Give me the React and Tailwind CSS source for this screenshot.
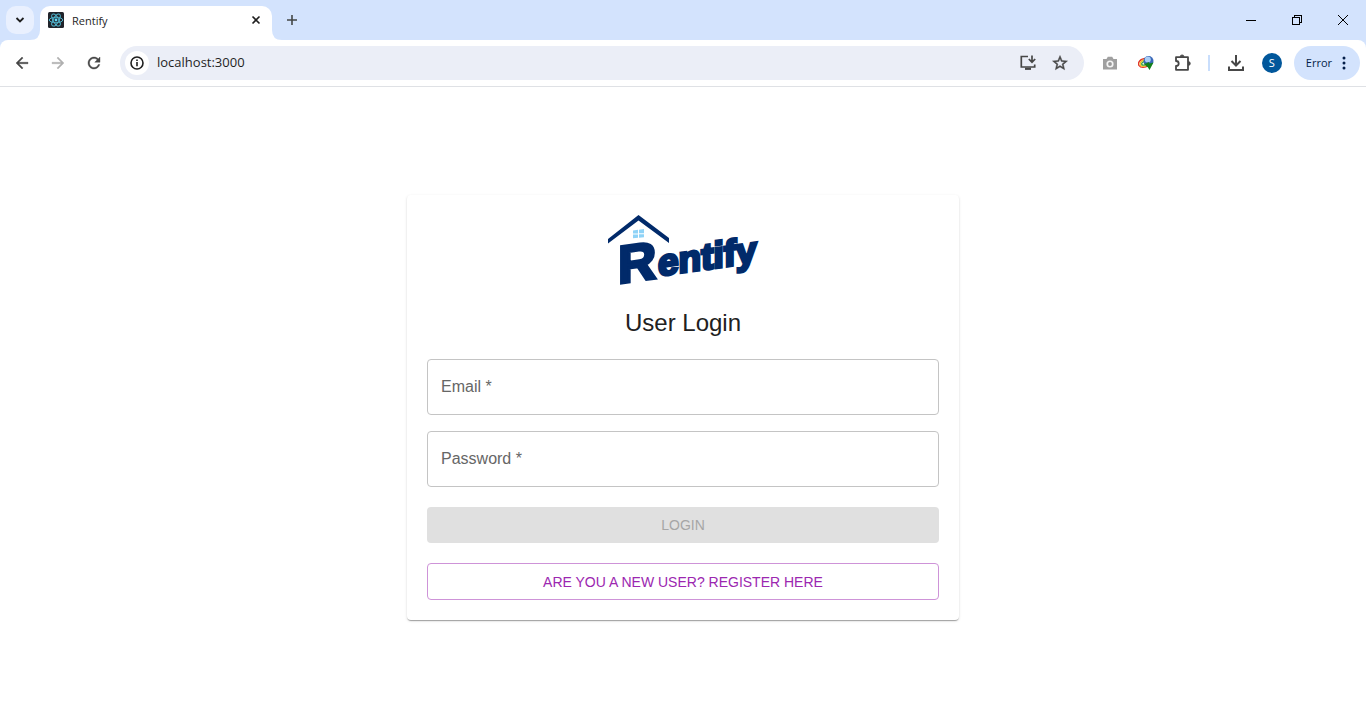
import React from 'react';

const icon = 'shrink-0';

function ReactFavicon() {
  return (
    <svg className={icon} width="16" height="16" viewBox="0 0 32 32" aria-hidden="true">
      <rect width="32" height="32" rx="3" fill="#20232a" />
      <g fill="none" stroke="#4fb3cb" strokeWidth="2">
        <ellipse cx="16" cy="16" rx="13.500" ry="5.500" />
        <ellipse cx="16" cy="16" rx="13.500" ry="5.500" transform="rotate(60 16 16)" />
        <ellipse cx="16" cy="16" rx="13.500" ry="5.500" transform="rotate(120 16 16)" />
      </g>
      <circle cx="16" cy="16" r="2.8" fill="#61dafb" />
    </svg>
  );
}

function RentifyLogo() {
  return (
    <svg className="overflow-visible" width="150" height="72" viewBox="0 0 150 72" role="img" aria-label="Rentify">
      <path d="M0 24 L30.500 0 L61 23 V28 L30.500 5.500 L0 28.500 Z" fill="#012a6a" />
      <path
        d="M25 15.500 l5 -.7 v3.700 h-5z M31 14.700 l5 -.7 v4.300 h-5z M25 19.500 h5 v3.300 l-5 .4z M31 19.300 h5 v3 l-5 .4z"
        fill="#8fd3f7"
      />
      <g
        fill="#012a6a"
        stroke="#012a6a"
        transform="skewY(-8)"
        fontFamily="'Liberation Sans', Arial, sans-serif"
        fontWeight="700"
      >
        <text x="10" y="70" fontSize="53" strokeWidth="3">R</text>
        <text x="50" y="68" fontSize="37" strokeWidth="3">entify</text>
      </g>
    </svg>
  );
}

function TabStrip() {
  return (
    <div className="flex h-10 items-end bg-[#d3e3fd]">
      <div className="flex h-10 items-center pl-[6px]">
        <button aria-label="Search tabs" className="flex size-7 items-center justify-center rounded-[10px] bg-[#e9f0fe]">
          <svg width="10" height="10" viewBox="0 0 10 10" fill="none" stroke="#1f1f1f" strokeWidth="1.8"><path d="M1.500 3 L5 6.500 L8.500 3" /></svg>
        </button>
      </div>
      <svg className="-ml-1 shrink-0" width="10" height="10" viewBox="0 0 10 10" fill="#fff" aria-hidden="true"><path d="M10 0 Q10 10 0 10 H10 Z" /></svg>
      <div className="flex h-[34px] w-[232px] items-center rounded-t-[10px] bg-white pb-[6px] pl-2 pr-[10px]">
        <ReactFavicon />
        <span className="ml-2 flex-1 pt-px text-[11px] leading-4 text-[#1f1f1f]">Rentify</span>
        <button aria-label="Close tab" className="flex size-3 items-center justify-center">
          <svg width="10" height="10" viewBox="0 0 10 10" stroke="#1f1f1f" strokeWidth="1.6"><path d="M1.500 1.500 L8.500 8.500 M8.500 1.500 L1.500 8.500" /></svg>
        </button>
      </div>
      <svg className="shrink-0" width="10" height="10" viewBox="0 0 10 10" fill="#fff" aria-hidden="true"><path d="M0 0 Q0 10 10 10 H0 Z" /></svg>
      <button aria-label="New tab" className="flex h-10 w-5 items-center justify-center">
        <svg width="12" height="12" viewBox="0 0 12 12" stroke="#444746" strokeWidth="1.6"><path d="M6 1 V11 M1 6 H11" /></svg>
      </button>
      <div className="flex h-10 flex-1 items-center justify-end">
        <button aria-label="Minimize" className="flex h-10 w-[46px] items-center justify-center">
          <svg width="10" height="10" viewBox="0 0 10 10" stroke="#000" shapeRendering="crispEdges"><path d="M0 5.500 H10" /></svg>
        </button>
        <button aria-label="Restore" className="flex h-10 w-[46px] items-center justify-center">
          <svg width="10" height="10" viewBox="0 0 10 10" fill="none" stroke="#000" shapeRendering="crispEdges"><path d="M.5 2.500 H7.500 V9.500 H.5 Z M2.500 2.500 V.5 H9.500 V7.500 H7.500" /></svg>
        </button>
        <button aria-label="Close" className="flex h-10 w-[46px] items-center justify-center">
          <svg width="10" height="10" viewBox="0 0 10 10" stroke="#000"><path d="M0 0 L10 10 M10 0 L0 10" /></svg>
        </button>
      </div>
    </div>
  );
}

function IconButton({ label, children }) {
  return (
    <button aria-label={label} className="flex size-9 shrink-0 items-center justify-center">
      {children}
    </button>
  );
}

function Toolbar() {
  return (
    <div className="bg-[#d3e3fd]">
      <div className="flex h-[47px] items-center rounded-t-lg border-b border-[#dfe1e5] bg-white pl-1 pr-[6px]">
        <IconButton label="Back">
          <svg width="18" height="18" viewBox="0 0 24 24" fill="#474747" stroke="#474747" strokeWidth=".5"><path d="M20 11H7.830l5.590-5.590L12 4l-8 8 8 8 1.410-1.410L7.830 13H20v-2z" /></svg>
        </IconButton>
        <IconButton label="Forward">
          <svg width="18" height="18" viewBox="0 0 24 24" fill="#b0b0b0" stroke="#b0b0b0" strokeWidth=".5"><path d="M12 4l-1.410 1.410L16.170 11H4v2h12.170l-5.580 5.590L12 20l8-8z" /></svg>
        </IconButton>
        <IconButton label="Reload">
          <svg width="18" height="18" viewBox="0 0 24 24" fill="#474747" stroke="#474747" strokeWidth=".5"><path d="M17.650 6.350C16.200 4.900 14.210 4 12 4c-4.420 0-7.990 3.580-7.990 8s3.570 8 7.990 8c3.730 0 6.840-2.550 7.730-6h-2.080c-.82 2.330-3.040 4-5.650 4-3.310 0-6-2.690-6-6s2.690-6 6-6c1.660 0 3.140.69 4.220 1.780L13 11h7V4l-2.350 2.350z" /></svg>
        </IconButton>
        <div className="ml-2 flex h-[34px] flex-1 items-center rounded-full bg-[#ebeef7] pl-[5px] pr-2">
          <button aria-label="Site information" className="flex size-6 items-center justify-center rounded-full bg-white">
            <svg width="14" height="14" viewBox="0 0 14 14" fill="none" stroke="#1f1f1f" strokeWidth="1.6"><circle cx="7" cy="7" r="6" /><path d="M7 6 V10.300 M7 3.500 V5" /></svg>
          </button>
          <input aria-label="Address" defaultValue="localhost:3000" className="ml-2 min-w-0 flex-1 bg-transparent text-[13px] text-[#1f1f1f] outline-none" />
          <button aria-label="Install app" className="flex size-8 items-center justify-center">
            <svg width="18" height="18" viewBox="0 0 18 18" fill="none" stroke="#474747" strokeWidth="1.700"><path d="M9 2.500 H2.300 V13 H15.700 V10.500" /><path d="M13 1.500 V7.500 M9.800 5 L13 8.200 L16.200 5" /><path d="M6 14.800 H12" strokeWidth="2.200" /></svg>
          </button>
          <button aria-label="Bookmark this tab" className="flex size-8 items-center justify-center">
            <svg width="18" height="18" viewBox="0 0 24 24" fill="#474747" stroke="#474747" strokeWidth=".6"><path d="M22 9.240l-7.190-.62L12 2 9.190 8.630 2 9.240l5.460 4.730L5.820 21 12 17.270 18.180 21l-1.630-7.030L22 9.240zM12 15.400l-3.760 2.270 1-4.280-3.320-2.880 4.380-.38L12 6.100l1.710 4.040 4.380.38-3.320 2.880 1 4.280L12 15.400z" /></svg>
          </button>
        </div>
        <div className="ml-2 flex items-center">
          <IconButton label="Screenshot extension">
            <svg width="16" height="16" viewBox="0 0 16 16"><path fill="#a0a0a0" d="M1 4 h3.500 l1.300-2.200 h4.400 l1.300 2.200 H15 V14.500 H1z" /><circle cx="8" cy="9" r="3.600" fill="#f4f4f4" /><circle cx="8" cy="9" r="1.900" fill="#999" /></svg>
          </IconButton>
          <IconButton label="Download manager extension">
            <svg width="16" height="16" viewBox="0 0 16 16">
              <g fill="none" strokeWidth="1.400">
                <path d="M8 3.500 C2 3.500 -.5 8 1 10.500 S7 13 10.500 10.500" stroke="#e0352b" />
                <path d="M8 4.800 C3.500 5 1.300 8 2.300 10 S7 11.600 10 9.500" stroke="#f6c21c" />
                <path d="M8 6.100 C5 6.500 3 8.300 3.800 9.500 S7.500 10.200 9 8.500" stroke="#3fa648" />
              </g>
              <circle cx="10.500" cy="6" r="5" fill="#3a68b8" />
              <circle cx="9.800" cy="4.500" r="3" fill="#a8cdf5" />
              <path d="M5.500 8.500 l2.500 0 2.500-1.500 1 1.500 4-1 -4 7.500 -1.500-2.500z" fill="#128019" />
            </svg>
          </IconButton>
          <IconButton label="Extensions">
            <svg width="18" height="18" viewBox="0 0 18 18" fill="none" stroke="#474747" strokeWidth="1.800" strokeLinejoin="round"><path d="M3 3.200 H15 V15.800 H3 V12 C6.600 12 6.600 7 3 7 Z" /><path d="M7.200 2.800 a1.900 1.900 0 0 1 3.800 0 Z M15.400 7.600 a1.900 1.900 0 0 1 0 3.800 Z" fill="#474747" strokeWidth=".8" /></svg>
          </IconButton>
        </div>
        <div className="mx-2 h-4 w-0.5 bg-[#c9defc]" />
        <IconButton label="Downloads">
          <svg width="18" height="18" viewBox="0 0 18 18" fill="none" stroke="#474747" strokeWidth="2"><path d="M9 1 V11 M4.500 7 L9 11.500 L13.500 7 M2 12.500 V16 H16 V12.500" /></svg>
        </IconButton>
        <IconButton label="Profile">
          <span className="flex size-5 items-center justify-center rounded-full bg-[#01579b] text-[11px] text-white">S</span>
        </IconButton>
        <button className="ml-1 flex h-[34px] items-center gap-[10px] rounded-full bg-[#d3e3fd] pl-3 pr-[14px] text-[11px] text-[#041e49]">
          Error
          <svg width="4" height="14" viewBox="0 0 4 14" fill="#041e49"><circle cx="2" cy="2" r="1.500" /><circle cx="2" cy="7" r="1.500" /><circle cx="2" cy="12" r="1.500" /></svg>
        </button>
      </div>
    </div>
  );
}

function TextField({ id, label, type }) {
  return (
    <div className="grid h-14 rounded border border-[#c4c4c4]">
      <input id={id} type={type} required className="peer col-start-1 row-start-1 w-full bg-transparent px-[13px] text-base outline-none" />
      <label htmlFor={id} className="pointer-events-none col-start-1 row-start-1 self-center px-[13px] text-base text-[#666] peer-valid:invisible">
        {label} *
      </label>
    </div>
  );
}

function LoginCard() {
  return (
    <form className="flex w-full max-w-[552px] flex-col rounded bg-white p-5 shadow-[0_2px_1px_-1px_rgba(0,0,0,0.2),0_1px_1px_0_rgba(0,0,0,0.14),0_1px_3px_0_rgba(0,0,0,0.12)]">
      <div className="flex justify-center">
        <RentifyLogo />
      </div>
      <h1 className="my-5 text-center text-2xl leading-8 text-[#212121]">User Login</h1>
      <div className="flex flex-col gap-4">
        <TextField id="email" label="Email" type="email" />
        <TextField id="password" label="Password" type="password" />
      </div>
      <button type="submit" disabled className="mt-5 h-9 rounded bg-[#e0e0e0] text-sm text-[#a6a6a6]">LOGIN</button>
      <button type="button" className="mt-5 h-[37px] rounded border border-[#ce93d8] text-sm text-[#9c27b0]">ARE YOU A NEW USER? REGISTER HERE</button>
    </form>
  );
}

export default function App() {
  return (
    <div className="flex min-h-screen flex-col bg-white">
      <header className="font-['Open_Sans','Noto_Sans',sans-serif]">
        <TabStrip />
        <Toolbar />
      </header>
      <main className="flex flex-1 items-center justify-center px-4 font-['Liberation_Sans',Arial,sans-serif]">
        <LoginCard />
      </main>
    </div>
  );
}
